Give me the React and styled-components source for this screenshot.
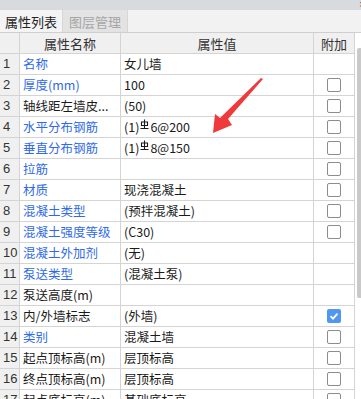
import styled, { createGlobalStyle } from 'styled-components'

const GlobalStyle = createGlobalStyle`
    html, body {
        margin: 0;
        padding: 0;
        background: #ffffff;
        overflow: hidden;
    }
    body {
        font-family: "Noto Sans CJK SC", "Liberation Sans", sans-serif;
    }
`

const rows = [
    { name: '名称', blue: true, value: '女儿墙', box: 'none' },
    { name: '厚度(mm)', blue: true, value: '100', box: 'off' },
    { name: '轴线距左墙皮...', value: '(50)', box: 'off' },
    { name: '水平分布钢筋', blue: true, value: ['(1)', '6@200'], box: 'off' },
    { name: '垂直分布钢筋', blue: true, value: ['(1)', '8@150'], box: 'off' },
    { name: '拉筋', blue: true, value: '', box: 'off' },
    { name: '材质', blue: true, value: '现浇混凝土', box: 'off' },
    { name: '混凝土类型', blue: true, value: '(预拌混凝土)', box: 'off' },
    { name: '混凝土强度等级', blue: true, value: '(C30)', box: 'off' },
    { name: '混凝土外加剂', blue: true, value: '(无)', box: 'none' },
    { name: '泵送类型', blue: true, value: '(混凝土泵)', box: 'none' },
    { name: '泵送高度(m)', value: '', box: 'none' },
    { name: '内/外墙标志', value: '(外墙)', box: 'on' },
    { name: '类别', blue: true, value: '混凝土墙', box: 'off' },
    { name: '起点顶标高(m)', value: '层顶标高', box: 'off' },
    { name: '终点顶标高(m)', value: '层顶标高', box: 'off' },
    { name: '起点底标高(m)', value: '基础底标高', box: 'off' },
]

export default function App() {
    return (
        <Panel>
            <GlobalStyle />
            <TopBand>
                <Close>×</Close>
            </TopBand>
            <Tabs>
                <Tab active>属性列表</Tab>
                <Tab>图层管理</Tab>
            </Tabs>
            <Body>
                <Grid>
                    <HeadCell />
                    <HeadCell>属性名称</HeadCell>
                    <HeadCell>属性值</HeadCell>
                    <HeadCell>附加</HeadCell>
                    {rows.map((r, i) => (
                        <Row key={i} r={r} n={i + 1} />
                    ))}
                </Grid>
                <Scroll>
                    <Thumb />
                </Scroll>
            </Body>
            <Arrow viewBox="0 0 361 399" width="361" height="399">
                <polygon
                    points="263,79 228,119 232,125 213,133 215,114 220,118 261,78"
                    fill="#f0393a"
                />
            </Arrow>
        </Panel>
    )
}

function Row({ r, n }) {
    return (
        <>
            <NumCell>{n}</NumCell>
            <Cell blue={r.blue}>{r.name}</Cell>
            <Cell>
                {Array.isArray(r.value) ? (
                    <>
                        {r.value[0]}
                        <Rebar viewBox="0 0 9 11" width="9" height="11">
                            <path d="M4.5 0.5 V9.5 M1.5 3 H7.5 V6.5 H1.5 Z M0.5 9.5 H8.5" stroke="#1a1a1a" strokeWidth="1.1" fill="none" />
                        </Rebar>
                        {r.value[1]}
                    </>
                ) : r.value}
            </Cell>
            <BoxCell>
                {r.box === 'off' && <Check />}
                {r.box === 'on' && (
                    <Check on>
                        <svg viewBox="0 0 14 14" width="14" height="14">
                            <path d="M3.5 7.2 L6 9.6 L10.5 4.6" stroke="#ffffff" strokeWidth="1.8" fill="none" />
                        </svg>
                    </Check>
                )}
            </BoxCell>
        </>
    )
}

const Panel = styled.div`
    position: relative;
    width: 361px;
    height: 399px;
    overflow: hidden;
    background: #ffffff;
`

const TopBand = styled.div`
    height: 10px;
    background: #d9dade;
    display: flex;
    justify-content: flex-end;
    overflow: hidden;
`

const Close = styled.span`
    font-family: "Liberation Sans", sans-serif;
    font-size: 10px;
    line-height: 10px;
    color: #555;
    margin-right: -4px;
`

const Tabs = styled.div`
    display: flex;
    height: 22px;
    background: #f2f2f2;
    border-bottom: 1px solid #cfcfcf;
`

const Tab = styled.div`
    display: flex;
    align-items: center;
    justify-content: center;
    width: ${p => (p.active ? '62px' : '64px')};
    font-size: 13px;
    color: ${p => (p.active ? '#222' : '#a6a6a6')};
    background: ${p => (p.active ? '#f4f4f4' : '#e3e3e3')};
    border-right: 1px solid #d6d6d6;
`

const Body = styled.div`
    display: flex;
`

const Grid = styled.div`
    display: grid;
    grid-template-columns: 20px 101px 193px 41px;
    grid-auto-rows: 21px;
    width: 355px;
`

const HeadCell = styled.div`
    display: flex;
    align-items: center;
    justify-content: center;
    background: #f0f0f0;
    border-right: 1px solid #d4d4d4;
    border-bottom: 1px solid #d4d4d4;
    font-size: 13px;
    color: #333;
    height: 20px;
`

const NumCell = styled.div`
    background: #f0f0f0;
    border-right: 1px solid #d4d4d4;
    border-bottom: 1px solid #d4d4d4;
    font-family: "Liberation Sans", sans-serif;
    font-size: 13px;
    color: #333;
    padding-left: 3px;
    line-height: 20px;
`

const Cell = styled.div`
    border-right: 1px solid #d4d4d4;
    border-bottom: 1px solid #d4d4d4;
    font-size: 12.5px;
    line-height: 20px;
    padding-left: 3px;
    white-space: nowrap;
    overflow: hidden;
    color: ${p => (p.blue ? '#2f6ae8' : '#1a1a1a')};
`

const Rebar = styled.svg`
    vertical-align: 2px;
    margin: 0 1px 0 1px;
`

const BoxCell = styled.div`
    display: flex;
    align-items: center;
    justify-content: center;
    border-right: 1px solid #d4d4d4;
    border-bottom: 1px solid #d4d4d4;
`

const Check = styled.div`
    width: 14px;
    height: 14px;
    box-sizing: border-box;
    border-radius: 2px;
    border: ${p => (p.on ? 'none' : '1px solid #8c8c8c')};
    background: ${p => (p.on ? '#4f97f2' : '#ffffff')};
    display: flex;
`

const Scroll = styled.div`
    width: 6px;
    padding-top: 15px;
    display: flex;
    justify-content: flex-end;
`

const Thumb = styled.div`
    width: 4px;
    height: 250px;
    background: #c9c9c9;
    border-radius: 2px 0 0 2px;
`

const Arrow = styled.svg`
    position: absolute;
    left: 0;
    top: 0;
    pointer-events: none;
`
